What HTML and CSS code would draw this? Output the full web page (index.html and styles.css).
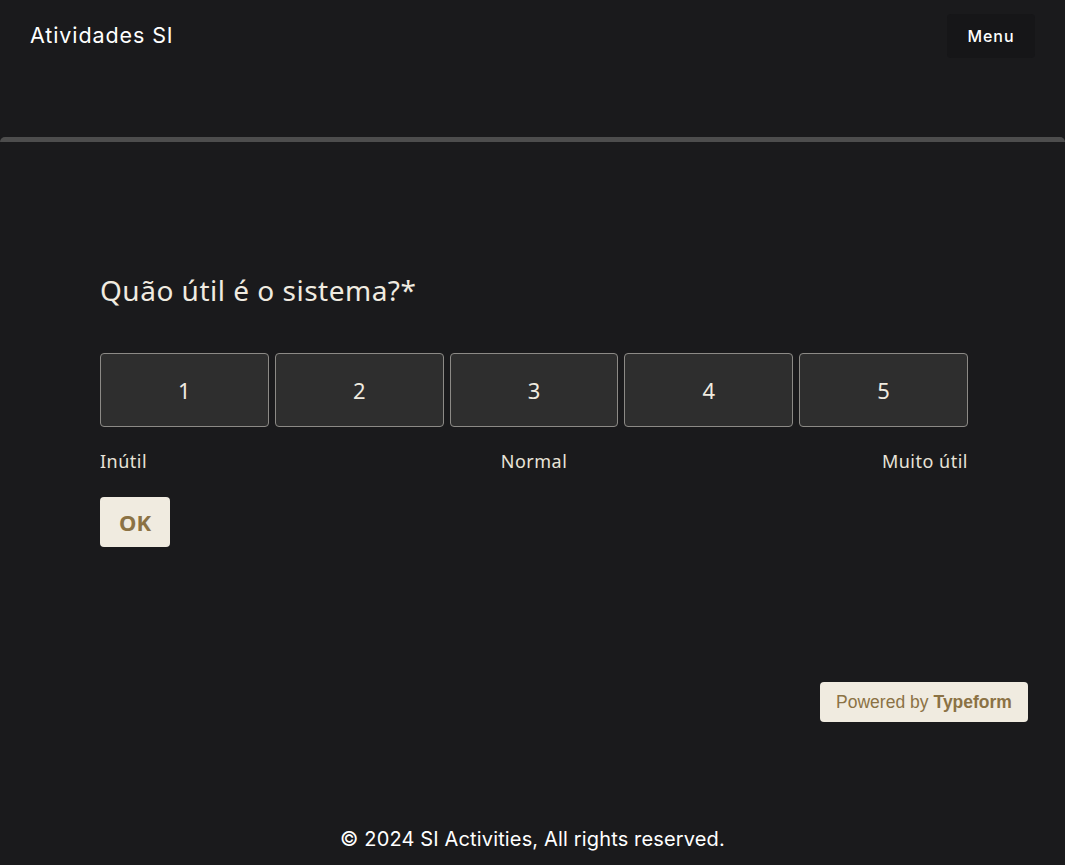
FILE: index.html
```html
<!DOCTYPE html>
<html lang="pt">
<head>
<meta charset="utf-8">
<title>Atividades SI</title>
<link rel="stylesheet" href="styles.css">
</head>
<body>
<header class="topbar">
  <div class="brand">Atividades SI</div>
  <button class="menu-btn">Menu</button>
</header>
<main class="embed">
  <div class="embed-bar"></div>
  <section class="form">
    <h1 class="question">Quão útil é o sistema?*</h1>
    <div class="scale">
      <button class="opt">1</button>
      <button class="opt">2</button>
      <button class="opt">3</button>
      <button class="opt">4</button>
      <button class="opt">5</button>
    </div>
    <div class="labels">
      <span class="lbl-left">Inútil</span>
      <span class="lbl-mid">Normal</span>
      <span class="lbl-right">Muito útil</span>
    </div>
    <button class="ok">OK</button>
  </section>
  <div class="powered-row">
    <a class="powered">Powered by <b>Typeform</b></a>
  </div>
</main>
<footer class="footer">© 2024 SI Activities, All rights reserved.</footer>
</body>
</html>
```
FILE: styles.css
```css
* { box-sizing: border-box; }
html, body { margin: 0; padding: 0; }
body {
  background: #1a1a1c;
  color: #ffffff;
  font-family: "Inter", "Liberation Sans", sans-serif;
  width: 1065px;
  height: 865px;
  overflow: hidden;
}
.topbar {
  height: 72px;
  display: flex;
  align-items: center;
  justify-content: space-between;
  padding: 0 30px 0 30px;
}
.brand {
  font-family: "Inter", sans-serif;
  font-size: 21.5px;
  letter-spacing: 0.9px;
  color: #ffffff;
  margin-top: -2px;
}
.menu-btn {
  background: #161618;
  border: none;
  color: #ffffff;
  font-family: "Inter", sans-serif;
  font-size: 16px;
  font-weight: 500;
  letter-spacing: 0.9px;
  width: 88px;
  height: 44px;
  border-radius: 4px;
}
.embed {
  margin-top: 65px;
  height: 651px;
  display: flex;
  flex-direction: column;
}
.embed-bar {
  height: 5px;
  background: #4d4d4d;
  border-radius: 6px 6px 0 0;
}
.form {
  padding: 132px 97px 0 100px;
}
.question {
  margin: 0;
  font-family: "Noto Sans", sans-serif;
  font-weight: 400;
  font-size: 28px;
  letter-spacing: 0.5px;
  color: #f0ebe0;
  line-height: 32px;
}
.scale {
  margin-top: 47px;
  display: grid;
  grid-template-columns: repeat(5, 1fr);
  gap: 6px;
}
.opt {
  height: 74px;
  background: #2e2e2e;
  border: 1px solid #8c8a86;
  border-radius: 4px;
  color: #f0ebe0;
  font-family: "Noto Sans", sans-serif;
  font-size: 22px;
}
.labels {
  margin-top: 22px;
  display: grid;
  grid-template-columns: 1fr auto 1fr;
  font-family: "Noto Sans", sans-serif;
  font-size: 18px;
  letter-spacing: 0.5px;
  color: #e8e3d8;
  line-height: 24px;
}
.lbl-left { justify-self: start; }
.lbl-mid { justify-self: center; }
.lbl-right { justify-self: end; }
.ok {
  margin-top: 24px;
  width: 70px;
  height: 50px;
  background: #f0ebe0;
  border: none;
  border-radius: 4px;
  color: #8b7244;
  font-family: "Noto Sans", sans-serif;
  font-weight: 700;
  font-size: 22px;
}
.powered-row {
  margin-top: auto;
  margin-bottom: 66px;
  display: flex;
  justify-content: flex-end;
  padding-right: 37px;
}
.powered {
  background: #f0ebe0;
  color: #8b7244;
  font-family: "Liberation Sans", Arial, sans-serif;
  font-size: 17.5px;
  height: 40px;
  width: 208px;
  display: flex;
  align-items: center;
  justify-content: center;
  border-radius: 4px;
}
.powered b { margin-left: 5px; }
.footer {
  text-align: center;
  font-family: "Inter", sans-serif;
  font-size: 20px;
  letter-spacing: 0.15px;
  color: #ffffff;
  padding-top: 39px;
}
```
